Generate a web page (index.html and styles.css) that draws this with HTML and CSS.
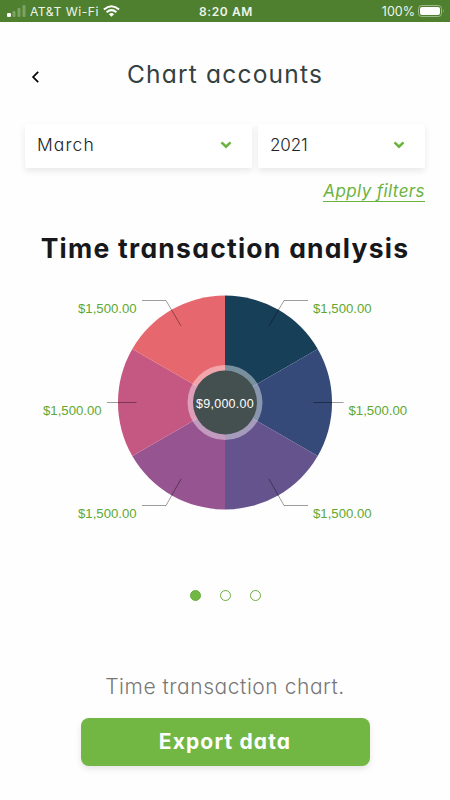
FILE: index.html
```html
<!DOCTYPE html>
<html lang="en">
  <head>
    <meta charset="UTF-8">
    <title>Chart accounts</title>
    <meta name="viewport" content="width=device-width, initial-scale=1">
    <link rel="stylesheet" href="styles.css">
  </head>
  <body>
    <div class="status">
      <div class="carrier">
        <svg width="20" height="12" viewBox="0 0 20 12">
          <rect x="0" y="8" width="4" height="4" rx="1" fill="#fff"/>
          <g fill="#7da264">
            <rect x="5.5" y="6" width="3" height="6" rx="1"/>
            <rect x="10.5" y="3" width="3" height="9" rx="1"/>
            <rect x="15.5" y="0" width="3" height="12" rx="1"/>
          </g>
        </svg>
        <span class="carrier-name">AT&amp;T Wi-Fi</span>
        <svg width="17" height="12" viewBox="0 0 17 12" fill="none" stroke="#fff" stroke-width="2">
          <path d="M.9 4.6Q8.5-2 16.1 4.6M3.6 7.3Q8.5 3 13.4 7.3"/>
          <path d="M8.5 11.8L5.9 9.2Q8.5 7 11.1 9.2Z" fill="#fff" stroke="none"/>
        </svg>
      </div>
      <div class="clock">8:20 AM</div>
      <div class="power">
        <span class="percent">100%</span>
        <svg width="27" height="12" viewBox="0 0 27 12">
          <rect x=".5" y=".5" width="23" height="11" rx="3" fill="none" stroke="#9dbb88"/>
          <rect x="2" y="2" width="20" height="8" rx="2" fill="#fff"/>
          <path d="M25 4q1.6 2 0 4z" fill="#9dbb88"/>
        </svg>
      </div>
    </div>

    <div class="header">
      <a class="back">
        <svg width="10" height="12" viewBox="0 0 10 12" fill="none" stroke="#000" stroke-width="1.7">
          <path d="M7.2.9L2.1 6l5.1 5.1"/>
        </svg>
      </a>
      <h1>Chart accounts</h1>
    </div>

    <div class="filters">
      <div class="select month">
        <span class="value">March</span>
        <svg width="12" height="8" viewBox="0 0 12 8" fill="none" stroke="#6cb33e" stroke-width="2.6"><path d="M1.5 1.4L6 5.7l4.5-4.3"/></svg>
      </div>
      <div class="select year">
        <span class="value">2021</span>
        <svg width="12" height="8" viewBox="0 0 12 8" fill="none" stroke="#6cb33e" stroke-width="2.6"><path d="M1.5 1.4L6 5.7l4.5-4.3"/></svg>
      </div>
    </div>
    <div class="apply"><a>Apply filters</a></div>

    <h2>Time transaction analysis</h2>

    <svg class="chart" width="450" height="240" viewBox="0 280 450 240">
      <!-- slices, clockwise from the top -->
      <path d="M225 402.5V295.5A107 107 0 0 1 317.7 349z" fill="#183f58"/>
      <path d="M225 402.5L317.7 349A107 107 0 0 1 317.7 456z" fill="#354a78"/>
      <path d="M225 402.5L317.7 456A107 107 0 0 1 225 509.5z" fill="#64538d"/>
      <path d="M225 402.5V509.5A107 107 0 0 1 132.3 456z" fill="#965491"/>
      <path d="M225 402.5L132.3 456A107 107 0 0 1 132.3 349z" fill="#c55883"/>
      <path d="M225 402.5L132.3 349A107 107 0 0 1 225 295.5z" fill="#e6676d"/>
      <circle cx="225" cy="402.5" r="37.5" fill="#fff" fill-opacity=".42"/>
      <circle cx="225" cy="402.5" r="32" fill="#44504f"/>
      <g class="leaders">
        <path d="M142 300.5h24l15 25.5"/>
        <path d="M308 300.5h-24l-15 25.5"/>
        <path d="M107 402.5h29.5"/>
        <path d="M343.5 402.5h-30"/>
        <path d="M142 505.5h24l15-26.5"/>
        <path d="M308 505.5h-24l-15-26.5"/>
      </g>
      <g class="amounts">
        <text x="78" y="313">$1,500.00</text>
        <text x="313" y="313">$1,500.00</text>
        <text x="43" y="415">$1,500.00</text>
        <text x="348.5" y="415">$1,500.00</text>
        <text x="78" y="518">$1,500.00</text>
        <text x="313" y="518">$1,500.00</text>
      </g>
      <text class="total" x="225" y="407.5">$9,000.00</text>
    </svg>

    <div class="dots">
      <span class="dot active"></span>
      <span class="dot"></span>
      <span class="dot"></span>
    </div>

    <p class="caption">Time transaction chart.</p>
    <a class="export">Export data</a>
  </body>
</html>
```

FILE: styles.css
```css
* {
  box-sizing: border-box;
}
body {
  margin: 0;
  height: 800px;
  overflow: hidden;
  background: #fefefe;
  font-family: Inter, "Liberation Sans", sans-serif;
  font-feature-settings: "cv11";
}
svg {
  display: block;
  flex: none;
}
h1, h2, p {
  margin: 0;
}
.status {
  display: grid;
  grid-template-columns: 1fr auto 1fr;
  align-items: center;
  height: 22px;
  padding: 0 5px 0 7px;
  background: #4f8030;
  color: #eef5e9;
  font-size: 12px;
  font-feature-settings: normal;
  white-space: nowrap;
}
.carrier, .power {
  display: flex;
  align-items: center;
}
.carrier-name {
  margin: 0 4px 0 3px;
  font-size: 12.2px;
  letter-spacing: 0.5px;
}
.clock {
  font-weight: 600;
  letter-spacing: 0.6px;
}
.power {
  justify-content: flex-end;
}
.percent {
  margin-right: 3px;
  font-size: 12.5px;
}
.header {
  display: grid;
  grid-template-columns: 50px 1fr 50px;
  align-items: center;
  height: 102px;
}
.back {
  padding: 7px 0 0 31px;
}
h1 {
  padding-top: 2px;
  color: #344142;
  font-size: 24.5px;
  font-weight: 400;
  line-height: 32px;
  letter-spacing: 1.2px;
  text-align: center;
  white-space: nowrap;
}
.filters {
  display: flex;
  gap: 6px;
  padding: 0 25px;
}
.select {
  display: flex;
  align-items: center;
  justify-content: space-between;
  height: 44px;
  padding: 0 20px 3px 12px;
  border-radius: 2px;
  background: #fff;
  box-shadow: 0 3px 7px rgba(0, 0, 0, 0.09);
  color: #202326;
  font-size: 17px;
  font-weight: 300;
}
.month {
  width: 227px;
  font-size: 17.5px;
  letter-spacing: 1.1px;
}
.year {
  width: 167px;
  letter-spacing: -0.1px;
}
.apply {
  height: 50px;
  padding: 12px 25px 0 0;
  color: #6cb33e;
  font-size: 17px;
  font-style: italic;
  line-height: 22px;
  letter-spacing: 0.4px;
  text-align: right;
}
.apply a {
  display: inline-block;
  height: 22px;
  border-bottom: 1px solid #6cb33e;
}
h2 {
  height: 62px;
  padding-top: 14px;
  color: #17181b;
  font-size: 26.5px;
  font-weight: 700;
  line-height: 32px;
  letter-spacing: 1.25px;
  text-align: center;
  white-space: nowrap;
}
.leaders {
  fill: none;
  stroke: #000;
  stroke-opacity: 0.55;
  stroke-width: 0.7;
}
.amounts {
  fill: #5fa832;
  font: 13.2px "Liberation Sans", Arial, sans-serif;
}
.total {
  fill: #fff;
  font: 12.5px "Liberation Sans", Arial, sans-serif;
  letter-spacing: 0.25px;
  text-anchor: middle;
}
.dots {
  display: flex;
  justify-content: center;
  gap: 19px;
  padding-top: 70px;
}
.dot {
  width: 11px;
  height: 11px;
  border: 1px solid #6cad42;
  border-radius: 50%;
}
.dot.active {
  background: #70b744;
}
.caption {
  height: 117px;
  padding-top: 70px;
  color: #777;
  font-size: 21px;
  font-weight: 300;
  line-height: 32px;
  letter-spacing: 0.55px;
  text-align: center;
  white-space: nowrap;
}
.export {
  display: block;
  width: 289px;
  height: 48px;
  margin: 0 auto;
  border-radius: 8px;
  background: #72b644;
  box-shadow: 0 3px 6px rgba(0, 0, 0, 0.1);
  color: #fff;
  font-size: 21px;
  font-weight: 700;
  line-height: 47px;
  letter-spacing: 1.15px;
  text-align: center;
}
```
